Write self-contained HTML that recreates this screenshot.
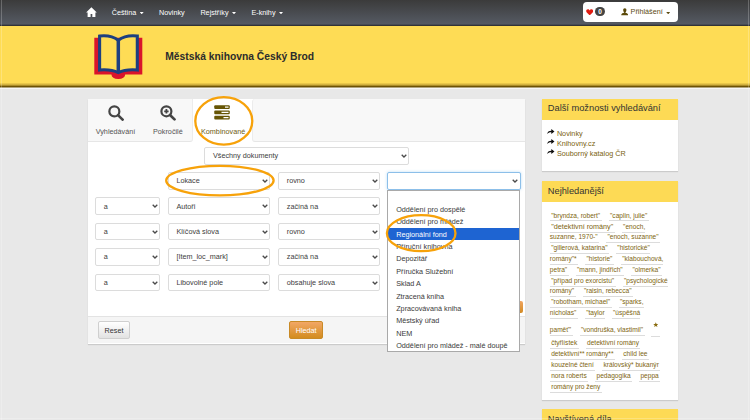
<!DOCTYPE html>
<html><head><meta charset="utf-8">
<style>
*{box-sizing:border-box;margin:0;padding:0}
html,body{width:750px;height:420px;overflow:hidden;background:#e8e8e8;font-family:"Liberation Sans",sans-serif;position:relative}
.a{position:absolute}
.t{position:absolute;white-space:nowrap;line-height:1}
#nav{left:0;top:0;width:750px;height:26px;background:linear-gradient(#3b3b3b,#555a63 24px,#3a3d45 25px,#2a2a2a 26px)}
.nl{color:#fff;font-size:7.24px;top:9.2px}
.caret{position:absolute;width:4px;height:2.2px;background:#fff;clip-path:polygon(0 0,100% 0,50% 100%)}
#hdr{left:0;top:26px;width:750px;height:63px;background:linear-gradient(#fedc55 0,#fedc55 56.5px,#c9a83a 59px,#6c5205 60.5px,#6c5205 61px,#f6f6f8 62px,#f6f6f8 63px)}
.panel{background:#fff;box-shadow:0 1px 1px rgba(0,0,0,.12)}
.sel{position:absolute;height:17.5px;border:1px solid #dcdcdc;border-radius:2px;background:#fff}
.sel span{position:absolute;left:7.7px;top:4.2px;font-size:7.24px;line-height:1;color:#3d3d3d;white-space:nowrap}
.chev{position:absolute;right:1.1px;top:6.1px;width:6px;height:4px}
.opt{position:absolute;left:8.5px;font-size:7.24px;line-height:1;color:#333;white-space:nowrap}
.side-h{background:#fdda55;color:#333;}
.tag{position:absolute;font-size:6.72px;line-height:1;color:#7d6a22;white-space:nowrap}
.tl{white-space:nowrap;line-height:1;color:#7e650f;font-size:6.6px}
.tl span{display:inline-block;border-bottom:1px solid #dcdcdc;margin-right:7px;vertical-align:baseline;line-height:1}
</style></head><body>

<!-- NAVBAR -->
<div id="nav" class="a"></div>
<svg class="a" style="left:86.2px;top:6.8px" width="11" height="10.2" viewBox="0 0 22 20.4"><path d="M10.8 0.6 L0.2 11 L3.2 11 L3.2 19.8 L9.2 19.8 L9.2 14.2 L12.6 14.2 L12.6 19.8 L18.8 19.8 L18.8 11 L21.6 11 Z" fill="#fff"/></svg>
<div class="t nl" style="left:111.7px">Čeština</div><div class="caret" style="left:139.7px;top:12px"></div>
<div class="t nl" style="left:159px">Novinky</div>
<div class="t nl" style="left:200.4px">Rejstříky</div><div class="caret" style="left:232px;top:12px"></div>
<div class="t nl" style="left:251.4px">E-knihy</div><div class="caret" style="left:279px;top:12px"></div>

<div class="a" style="left:583px;top:1.8px;width:95.2px;height:20.6px;background:#fff;border-radius:4px"></div>
<svg class="a" style="left:586px;top:8.8px" width="7.4" height="6.6" viewBox="0 0 20 18"><path d="M10 17.5 L2 9.5 C-1 6.5 0.5 1 5 1 C7.5 1 9 2.5 10 4 C11 2.5 12.5 1 15 1 C19.5 1 21 6.5 18 9.5 Z" fill="#e01c12"/></svg>
<div class="a" style="left:595px;top:7px;width:10.2px;height:9.4px;border-radius:5px;background:#444"></div>
<div class="t" style="left:598.2px;top:8.6px;font-size:6.5px;color:#fff;font-weight:bold">0</div>
<svg class="a" style="left:620.8px;top:8px" width="7.6" height="7.6" viewBox="0 0 16 16"><path d="M8 0.5 C5.6 0.5 4.6 2.2 4.6 4.4 C4.6 6.6 5.8 8.6 6.6 9 L6.6 10.2 C3 11 0.5 12.4 0.5 15.5 L15.5 15.5 C15.5 12.4 13 11 9.4 10.2 L9.4 9 C10.2 8.6 11.4 6.6 11.4 4.4 C11.4 2.2 10.4 0.5 8 0.5Z" fill="#5b4a0a"/></svg>
<div class="t" style="left:630.6px;top:8.3px;font-size:7.24px;color:#5b4a10">Přihlášení</div>
<div class="caret" style="left:666.2px;top:12px;background:#5b4a10"></div>

<!-- HEADER -->
<div id="hdr" class="a"></div>
<svg class="a" style="left:94px;top:34px" width="49" height="46" viewBox="0 0 49 46">
<path d="M0.3 3.8 H48.3 V40.6 H31.2 Q30.8 45 24.3 45 Q17.8 45 17.4 40.6 H0.3Z" fill="#d9142b"/>
<path d="M5.6 2 C12 1.2 19 2.2 24.3 6.2 C29.6 2.2 36.6 1.2 43.3 2 V36 C36.6 35.5 29.6 36 24.3 38.6 C19 36 12 35.5 5.6 36 Z" fill="#fedc55" stroke="#1d3f80" stroke-width="3.1" stroke-linejoin="miter"/>
<path d="M24.3 5.5 V39" stroke="#1d3f80" stroke-width="3.5"/>
</svg>
<div class="t" style="left:165.3px;top:52.1px;font-size:10.3px;font-weight:bold;color:#2c2c2c">Městská knihovna Český Brod</div>

<!-- MAIN PANEL -->
<div class="a panel" style="left:87.6px;top:98.6px;width:437.9px;height:245.9px"></div>
<div class="a" style="left:87.6px;top:98.6px;width:105.2px;height:43.4px;background:#f8f8f8;border-right:1px solid #ececec;border-bottom:1px solid #e6e6e6;border-bottom-right-radius:3px"></div>
<div class="a" style="left:252.3px;top:98.6px;width:273.2px;height:43.4px;background:#f8f8f8;border-left:1px solid #ececec;border-bottom:1px solid #e6e6e6;border-top-left-radius:3px;border-bottom-left-radius:3px"></div>

<!-- tab icons -->
<svg class="a" style="left:107.5px;top:105.2px" width="16.5" height="16" viewBox="0 0 33 32"><circle cx="12.7" cy="12.8" r="10" fill="none" stroke="#454545" stroke-width="4.4"/><path d="M20 20.2 L29.2 29.2" stroke="#454545" stroke-width="5.4" stroke-linecap="round"/></svg>
<div class="t" style="left:95.7px;top:127.5px;font-size:7.24px;color:#555">Vyhledávání</div>
<svg class="a" style="left:160.2px;top:105.2px" width="16.5" height="16" viewBox="0 0 33 32"><circle cx="12.8" cy="12.6" r="10" fill="none" stroke="#454545" stroke-width="4.4"/><path d="M12.8 8.2 V17 M8.4 12.6 H17.2" stroke="#454545" stroke-width="3.6"/><path d="M20 20 L29 28.8" stroke="#454545" stroke-width="5.4" stroke-linecap="round"/></svg>
<div class="t" style="left:153px;top:127.5px;font-size:7.24px;color:#555">Pokročilé</div>
<svg class="a" style="left:214.2px;top:105px" width="16" height="15" viewBox="0 0 32 30">
<rect x="0.5" y="0.5" width="31" height="7.5" rx="2" fill="#665505"/><rect x="22" y="3" width="7" height="2.5" fill="#fff"/>
<rect x="0.5" y="11" width="31" height="7.5" rx="2" fill="#665505"/><rect x="15" y="13.5" width="14" height="2.5" fill="#fff"/>
<rect x="0.5" y="21.5" width="31" height="7.5" rx="2" fill="#665505"/><rect x="19" y="24" width="10" height="2.5" fill="#fff"/>
</svg>
<div class="t" style="left:201px;top:127.6px;font-size:7.24px;color:#6e5c12">Kombinované</div>

<!-- form -->
<div class="sel" style="left:204.3px;top:147px;width:204.5px"><span>Všechny dokumenty</span><svg class="chev" viewBox="0 0 6 4"><path d="M0.7 0.7 L3 3 L5.3 0.7" fill="none" stroke="#4a4a4a" stroke-width="1.3"/></svg></div>

<div class="sel" style="left:167.7px;top:172px;width:102.1px"><span>Lokace</span><svg class="chev" viewBox="0 0 6 4"><path d="M0.7 0.7 L3 3 L5.3 0.7" fill="none" stroke="#4a4a4a" stroke-width="1.3"/></svg></div>
<div class="sel" style="left:278.1px;top:172px;width:101.9px"><span>rovno</span><svg class="chev" viewBox="0 0 6 4"><path d="M0.7 0.7 L3 3 L5.3 0.7" fill="none" stroke="#4a4a4a" stroke-width="1.3"/></svg></div>
<div class="sel" style="left:387px;top:172px;width:133.5px;border-color:#8cbfe9;box-shadow:0 0 3px rgba(102,175,233,.45)"><svg class="chev" viewBox="0 0 6 4"><path d="M0.7 0.7 L3 3 L5.3 0.7" fill="none" stroke="#4a4a4a" stroke-width="1.3"/></svg></div>

<div class="sel" style="left:95.1px;top:197.4px;width:65px"><span>a</span><svg class="chev" viewBox="0 0 6 4"><path d="M0.7 0.7 L3 3 L5.3 0.7" fill="none" stroke="#4a4a4a" stroke-width="1.3"/></svg></div>
<div class="sel" style="left:167.7px;top:197.4px;width:102.1px"><span>Autoři</span><svg class="chev" viewBox="0 0 6 4"><path d="M0.7 0.7 L3 3 L5.3 0.7" fill="none" stroke="#4a4a4a" stroke-width="1.3"/></svg></div>
<div class="sel" style="left:278.1px;top:197.4px;width:101.9px"><span>začíná na</span><svg class="chev" viewBox="0 0 6 4"><path d="M0.7 0.7 L3 3 L5.3 0.7" fill="none" stroke="#4a4a4a" stroke-width="1.3"/></svg></div>

<div class="sel" style="left:95.1px;top:222.8px;width:65px"><span>a</span><svg class="chev" viewBox="0 0 6 4"><path d="M0.7 0.7 L3 3 L5.3 0.7" fill="none" stroke="#4a4a4a" stroke-width="1.3"/></svg></div>
<div class="sel" style="left:167.7px;top:222.8px;width:102.1px"><span>Klíčová slova</span><svg class="chev" viewBox="0 0 6 4"><path d="M0.7 0.7 L3 3 L5.3 0.7" fill="none" stroke="#4a4a4a" stroke-width="1.3"/></svg></div>
<div class="sel" style="left:278.1px;top:222.8px;width:101.9px"><span>rovno</span><svg class="chev" viewBox="0 0 6 4"><path d="M0.7 0.7 L3 3 L5.3 0.7" fill="none" stroke="#4a4a4a" stroke-width="1.3"/></svg></div>

<div class="sel" style="left:95.1px;top:248.1px;width:65px"><span>a</span><svg class="chev" viewBox="0 0 6 4"><path d="M0.7 0.7 L3 3 L5.3 0.7" fill="none" stroke="#4a4a4a" stroke-width="1.3"/></svg></div>
<div class="sel" style="left:167.7px;top:248.1px;width:102.1px"><span>[Item_loc_mark]</span><svg class="chev" viewBox="0 0 6 4"><path d="M0.7 0.7 L3 3 L5.3 0.7" fill="none" stroke="#4a4a4a" stroke-width="1.3"/></svg></div>
<div class="sel" style="left:278.1px;top:248.1px;width:101.9px"><span>začíná na</span><svg class="chev" viewBox="0 0 6 4"><path d="M0.7 0.7 L3 3 L5.3 0.7" fill="none" stroke="#4a4a4a" stroke-width="1.3"/></svg></div>

<div class="sel" style="left:95.1px;top:273.5px;width:65px"><span>a</span><svg class="chev" viewBox="0 0 6 4"><path d="M0.7 0.7 L3 3 L5.3 0.7" fill="none" stroke="#4a4a4a" stroke-width="1.3"/></svg></div>
<div class="sel" style="left:167.7px;top:273.5px;width:102.1px"><span>Libovolné pole</span><svg class="chev" viewBox="0 0 6 4"><path d="M0.7 0.7 L3 3 L5.3 0.7" fill="none" stroke="#4a4a4a" stroke-width="1.3"/></svg></div>
<div class="sel" style="left:278.1px;top:273.5px;width:101.9px"><span>obsahuje slova</span><svg class="chev" viewBox="0 0 6 4"><path d="M0.7 0.7 L3 3 L5.3 0.7" fill="none" stroke="#4a4a4a" stroke-width="1.3"/></svg></div>

<!-- orange hidden button -->
<div class="a" style="left:500px;top:301.4px;width:23px;height:11.3px;border-radius:2px;background:linear-gradient(#f0a560,#d28a22)"></div>

<!-- footer -->
<div class="a" style="left:87.6px;top:315.7px;width:437.9px;height:27.8px;background:#f5f5f5;border-top:1px solid #e3e3e3"></div>
<div class="a" style="left:98.1px;top:321px;width:31.5px;height:17.9px;border:1px solid #cfcfcf;border-radius:2px;background:linear-gradient(#fff,#e2e2e2)"></div>
<div class="t" style="left:104.6px;top:327px;font-size:7.24px;color:#333">Reset</div>
<div class="a" style="left:289px;top:321.2px;width:34.3px;height:17.6px;border:1px solid #c98a26;border-radius:2px;background:linear-gradient(#f2a766,#d38c1e)"></div>
<div class="t" style="left:295.7px;top:327px;font-size:7.24px;color:#fff">Hledat</div>

<!-- dropdown list -->
<div class="a" style="left:387.4px;top:189.7px;width:133.1px;height:161.9px;background:#fff;border:1px solid #a9a9a9"></div>
<div class="a" style="left:388.4px;top:227.6px;width:131.1px;height:12.2px;background:#1e64d2"></div>
<div class="t" style="left:396.2px;top:205.77px;font-size:7.24px;color:#3a3a3a">Oddělení pro dospělé</div>
<div class="t" style="left:396.2px;top:218.17px;font-size:7.24px;color:#3a3a3a">Oddělení pro mládež</div>
<div class="t" style="left:396.2px;top:230.57px;font-size:7.24px;color:#fff">Regionální fond</div>
<div class="t" style="left:396.2px;top:242.97px;font-size:7.24px;color:#3a3a3a">Příruční knihovna</div>
<div class="t" style="left:396.2px;top:255.37px;font-size:7.24px;color:#3a3a3a">Depozitář</div>
<div class="t" style="left:396.2px;top:267.77px;font-size:7.24px;color:#3a3a3a">Příručka Služební</div>
<div class="t" style="left:396.2px;top:280.17px;font-size:7.24px;color:#3a3a3a">Sklad A</div>
<div class="t" style="left:396.2px;top:292.57px;font-size:7.24px;color:#3a3a3a">Ztracená kniha</div>
<div class="t" style="left:396.2px;top:304.97px;font-size:7.24px;color:#3a3a3a">Zpracovávaná kniha</div>
<div class="t" style="left:396.2px;top:317.37px;font-size:7.24px;color:#3a3a3a">Městský úřad</div>
<div class="t" style="left:396.2px;top:329.77px;font-size:7.24px;color:#3a3a3a">NEM</div>
<div class="t" style="left:396.2px;top:342.17px;font-size:7.24px;color:#3a3a3a">Oddělení pro mládež - malé doupě</div>

<div class="a panel" style="left:542px;top:98.8px;width:135.5px;height:72.5px"></div>
<div class="a" style="left:542px;top:98.8px;width:135.5px;height:21.2px;background:#fdda55"></div>
<div class="t" style="left:547.8px;top:104.24px;font-size:9.28px;color:#333">Další možnosti vyhledávání</div>
<div class="a panel" style="left:542px;top:181.4px;width:135.5px;height:218.5px"></div>
<div class="a" style="left:542px;top:181.4px;width:135.5px;height:20.6px;background:#fdda55"></div>
<div class="t" style="left:547.8px;top:187.04px;font-size:9.28px;color:#333">Nejhledanější</div>
<div class="a panel" style="left:542px;top:408.9px;width:135.5px;height:30px"></div>
<div class="a" style="left:542px;top:408.9px;width:135.5px;height:25px;background:#fdda55"></div>
<div class="t" style="left:547.8px;top:414.74px;font-size:9.28px;color:#333">Navštívená díla</div>
<svg class="a" style="left:547.2px;top:128.50px" width="7.6" height="5.2" viewBox="0 0 15.2 10.4"><path d="M0.3 10.2 C0.6 5.6 3.6 3.3 8.6 3.3 V0.2 L15 5 L8.6 9.8 V6.6 C4.6 6.6 2.2 7.6 0.3 10.2Z" fill="#111"/></svg>
<div class="t" style="left:556.9px;top:129.57px;font-size:7.24px;color:#7a620f">Novinky</div>
<svg class="a" style="left:547.2px;top:138.50px" width="7.6" height="5.2" viewBox="0 0 15.2 10.4"><path d="M0.3 10.2 C0.6 5.6 3.6 3.3 8.6 3.3 V0.2 L15 5 L8.6 9.8 V6.6 C4.6 6.6 2.2 7.6 0.3 10.2Z" fill="#111"/></svg>
<div class="t" style="left:556.9px;top:139.57px;font-size:7.24px;color:#7a620f">Knihovny.cz</div>
<svg class="a" style="left:547.2px;top:148.50px" width="7.6" height="5.2" viewBox="0 0 15.2 10.4"><path d="M0.3 10.2 C0.6 5.6 3.6 3.3 8.6 3.3 V0.2 L15 5 L8.6 9.8 V6.6 C4.6 6.6 2.2 7.6 0.3 10.2Z" fill="#111"/></svg>
<div class="t" style="left:556.9px;top:149.57px;font-size:7.24px;color:#7a620f">Souborný katalog ČR</div>

<div class="a tl" style="left:549.8px;top:212.51px"><span style="font-size:6.6px;padding:0 1.4px 1.39px 1.4px">"bryndza, robert"</span><span style="font-size:6.6px;padding:0 1.4px 1.39px 1.4px">"caplin, julie"</span></div>
<div class="a tl" style="left:549.8px;top:223.36px"><span style="font-size:7.23px;padding:0 1.4px 1.29px 1.4px">"detektivní romány"</span><span style="font-size:6.6px;padding:0 0.0px 1.39px 1.4px">"enoch,</span></div>
<div class="a tl" style="left:549.8px;top:234.21px"><span style="font-size:6.6px;padding:0 1.4px 1.39px 0.0px">suzanne, 1970-"</span><span style="font-size:6.6px;padding:0 1.4px 1.39px 1.4px">"enoch, suzanne"</span></div>
<div class="a tl" style="left:549.8px;top:245.06px"><span style="font-size:6.6px;padding:0 1.4px 1.39px 1.4px">"gillerová, katarina"</span><span style="font-size:6.6px;padding:0 0.0px 1.39px 1.4px">"historické"</span></div>
<div class="a tl" style="left:549.8px;top:255.91px"><span style="font-size:6.6px;padding:0 1.4px 1.39px 0.0px">romány"*</span><span style="font-size:6.6px;padding:0 1.4px 1.39px 1.4px">"historie"</span><span style="font-size:6.6px;padding:0 0.0px 1.39px 1.4px">"klabouchová,</span></div>
<div class="a tl" style="left:549.8px;top:266.76px"><span style="font-size:6.6px;padding:0 1.4px 1.39px 0.0px">petra"</span><span style="font-size:6.6px;padding:0 1.4px 1.39px 1.4px">"mann, jindřich"</span><span style="font-size:6.6px;padding:0 1.4px 1.39px 1.4px">"olmerka"</span></div>
<div class="a tl" style="left:549.8px;top:277.61px"><span style="font-size:6.6px;padding:0 1.4px 1.39px 1.4px">"případ pro exorcistu"</span><span style="font-size:6.6px;padding:0 0.0px 1.39px 1.4px">"psychologické</span></div>
<div class="a tl" style="left:549.8px;top:288.46px"><span style="font-size:6.6px;padding:0 1.4px 1.39px 0.0px">romány"</span><span style="font-size:6.6px;padding:0 1.4px 1.39px 1.4px">"raisin, rebecca"</span></div>
<div class="a tl" style="left:549.8px;top:299.31px"><span style="font-size:6.6px;padding:0 1.4px 1.39px 1.4px">"robotham, michael"</span><span style="font-size:6.6px;padding:0 0.0px 1.39px 1.4px">"sparks,</span></div>
<div class="a tl" style="left:549.8px;top:310.16px"><span style="font-size:6.6px;padding:0 1.4px 1.39px 0.0px">nicholas"</span><span style="font-size:6.6px;padding:0 0.0px 1.39px 1.4px">"taylor</span><span style="font-size:6.6px;padding:0 0.0px 1.39px 1.4px">"úspěšná</span></div>
<div class="a tl" style="left:549.8px;top:326.61px"><span style="font-size:6.6px;padding:0 1.4px 1.39px 0.0px">paměť"</span><span style="font-size:6.6px;padding:0 1.4px 1.39px 1.4px">"vondruška, vlastimil"</span></div>
<div class="a tl" style="left:549.8px;top:340.41px"><span style="font-size:6.6px;padding:0 1.4px 1.39px 1.4px">čtyřlístek</span><span style="font-size:6.6px;padding:0 1.4px 1.39px 1.4px">detektivní romány</span></div>
<div class="a tl" style="left:549.8px;top:351.21px"><span style="font-size:6.6px;padding:0 1.4px 1.39px 1.4px">detektivní** romány**</span><span style="font-size:6.6px;padding:0 1.4px 1.39px 1.4px">child lee</span></div>
<div class="a tl" style="left:549.8px;top:362.01px"><span style="font-size:6.6px;padding:0 1.4px 1.39px 1.4px">kouzelné čtení</span><span style="font-size:6.6px;padding:0 1.4px 1.39px 1.4px">královský* bukanýr</span></div>
<div class="a tl" style="left:549.8px;top:372.81px"><span style="font-size:6.6px;padding:0 1.4px 1.39px 1.4px">nora roberts</span><span style="font-size:6.6px;padding:0 1.4px 1.39px 1.4px">pedagogika</span><span style="font-size:6.6px;padding:0 1.4px 1.39px 1.4px">peppa</span></div>
<div class="a tl" style="left:549.8px;top:383.61px"><span style="font-size:6.6px;padding:0 1.4px 1.39px 1.4px">romány pro ženy</span></div>
<svg class="a" style="left:652.7px;top:322.4px" width="5.6" height="5.2" viewBox="0 0 20 19"><path d="M10 0.5 L12.6 7 L19.5 7.2 L14 11.5 L16 18.5 L10 14.4 L4 18.5 L6 11.5 L0.5 7.2 L7.4 7 Z" fill="#8a6c10"/></svg>
<div class="a" style="left:651.3px;top:336px;width:8.6px;height:1px;background:#dcdcdc"></div>

<svg class="a" style="left:0;top:0" width="750" height="420">
<ellipse cx="223.8" cy="120.9" rx="28.5" ry="23.8" fill="none" stroke="#f7a20a" stroke-width="2.3"/>
<ellipse cx="219.9" cy="180.6" rx="53.7" ry="14.8" fill="none" stroke="#f7a20a" stroke-width="2.3"/>
<ellipse cx="421.2" cy="233.2" rx="34.3" ry="18" fill="none" stroke="#f7a20a" stroke-width="2.3"/>
</svg>
<div class="a" style="left:1px;top:0;width:1px;height:420px;background:rgba(255,255,255,.22)"></div>
<div class="a" style="left:748px;top:0;width:1px;height:420px;background:rgba(255,255,255,.22)"></div>
<div class="a" style="left:0;top:418px;width:750px;height:1px;background:rgba(255,255,255,.22)"></div>
</body></html>
